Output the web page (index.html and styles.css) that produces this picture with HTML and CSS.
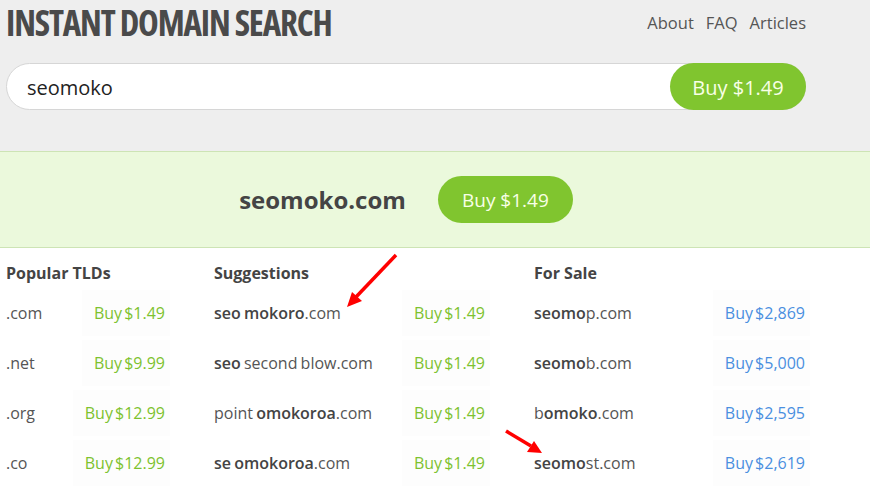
FILE: index.html
```html
<!DOCTYPE html>
<html lang="en">
<head>
  <meta charset="UTF-8">
  <meta name="viewport" content="width=device-width, initial-scale=1.0">
  <title>Instant Domain Search</title>
  <link rel="stylesheet" href="styles.css">
</head>
<body>
  <div id="top">
    <div class="wrap">
      <div class="top-row">
        <h1 class="logo">INSTANT DOMAIN SEARCH</h1>
        <nav class="nav">
          <a href="#">About</a>
          <a href="#">FAQ</a>
          <a href="#">Articles</a>
        </nav>
      </div>
      <div class="search">
        <span class="search-text">seomoko</span>
        <button class="btn search-btn">Buy $1.49</button>
      </div>
    </div>
  </div>

  <div id="exact">
    <div class="wrap exact-row">
      <span class="exact-name">seomoko.com</span>
      <button class="btn exact-btn">Buy $1.49</button>
    </div>
  </div>

  <div class="wrap results">
    <div class="col">
      <h3>Popular TLDs</h3>
      <div class="row"><span class="name">.com</span><a class="buy" href="#">Buy $1.49</a></div>
      <div class="row"><span class="name">.net</span><a class="buy" href="#">Buy $9.99</a></div>
      <div class="row"><span class="name">.org</span><a class="buy" href="#">Buy $12.99</a></div>
      <div class="row"><span class="name">.co</span><a class="buy" href="#">Buy $12.99</a></div>
    </div>
    <div class="col">
      <h3>Suggestions</h3>
      <div class="row"><span class="name"><b>seo</b> <b>mokoro</b>.com</span><a class="buy" href="#">Buy $1.49</a></div>
      <div class="row"><span class="name"><b>seo</b> second blow.com</span><a class="buy" href="#">Buy $1.49</a></div>
      <div class="row"><span class="name">point <b>omokoroa</b>.com</span><a class="buy" href="#">Buy $1.49</a></div>
      <div class="row"><span class="name"><b>se</b> <b>omokoroa</b>.com</span><a class="buy" href="#">Buy $1.49</a></div>
    </div>
    <div class="col">
      <h3>For Sale</h3>
      <div class="row"><span class="name"><b>seomo</b>p.com</span><a class="buy blue" href="#">Buy $2,869</a></div>
      <div class="row"><span class="name"><b>seomo</b>b.com</span><a class="buy blue" href="#">Buy $5,000</a></div>
      <div class="row"><span class="name">b<b>omoko</b>.com</span><a class="buy blue" href="#">Buy $2,595</a></div>
      <div class="row"><span class="name"><b>seomo</b>st.com</span><a class="buy blue" href="#">Buy $2,619</a></div>
    </div>
  </div>

  <!-- red annotation arrows drawn on top of the screenshot -->
  <svg class="marks" width="870" height="501" viewBox="0 0 870 501">
    <line x1="396" y1="255" x2="356" y2="297" stroke="#f00" stroke-width="3.5"/>
    <polygon points="347,307 362,301 352,292" fill="#f00"/>
    <line x1="506" y1="431" x2="531" y2="446" stroke="#f00" stroke-width="3.5"/>
    <polygon points="542,453 527,452 534,441" fill="#f00"/>
  </svg>
</body>
</html>
```

FILE: styles.css
```css
body {
  margin: 0;
  font-family: "Open Sans", "Liberation Sans", sans-serif;
  color: #555;
  background: #fff;
  position: relative;
}
.wrap {
  width: 800px;
  margin-left: 6px;
}
a {
  text-decoration: none;
}
b {
  font-weight: 600;
  color: #444;
}

/* header */
#top {
  background: #eee;
  padding-bottom: 41px;
}
.top-row {
  display: flex;
  justify-content: space-between;
  align-items: center;
  height: 46px;
}
.logo {
  margin: 0;
  font-size: 35px;
  font-weight: 700;
  font-stretch: 75%;
  color: #4a4a4a;
  letter-spacing: -1.15px;
  line-height: 46px;
}
.nav {
  display: flex;
  gap: 12px;
  font-size: 16.5px;
  margin-top: -2px;
}
.nav a {
  color: #555;
}
.search {
  margin-top: 17px;
  display: flex;
  align-items: center;
  height: 45px;
  border: 1px solid #d6d6d6;
  border-radius: 24px;
  background: #fff;
}
.search-text {
  flex: 1;
  padding: 1px 0 0 20px;
  font-size: 20px;
  color: #222;
}
.btn {
  font-family: inherit;
  border: none;
  background: #80c52f;
  color: #f8ffe6;
  border-radius: 24px;
  cursor: pointer;
}
.search-btn {
  margin: -1px -1px -1px 0;
  height: 47px;
  width: 136px;
  font-size: 20px;
  padding-top: 2px;
}

/* exact match band */
#exact {
  background: #ebf9dc;
  border-top: 1px solid #cde4b5;
  border-bottom: 1px solid #cde4b5;
}
.exact-row {
  height: 95px;
  display: flex;
  align-items: center;
  justify-content: center;
  gap: 32px;
}
.exact-name {
  font-size: 24px;
  font-weight: 700;
  color: #444;
}
.exact-btn {
  width: 135px;
  height: 47px;
  font-size: 19px;
}

/* result columns */
.results {
  display: grid;
  grid-template-columns: 159px 271px 271px;
  column-gap: 49px;
  padding-top: 13px;
}
.col h3 {
  margin: 0 0 3px;
  font-size: 16px;
  font-weight: 700;
  color: #444;
  line-height: 24px;
}
.row {
  height: 50px;
  display: flex;
  align-items: center;
  justify-content: space-between;
  font-size: 16px;
}
.name {
  word-spacing: -1px;
}
.buy {
  color: #7dc22f;
  word-spacing: -2px;
  background: #fdfdfd;
  padding: 12px 5px 12px 12px;
  margin-right: -5px;
}
.buy.blue {
  color: #4a8fe0;
}

.marks {
  position: absolute;
  top: 0;
  left: 0;
  pointer-events: none;
}
```
